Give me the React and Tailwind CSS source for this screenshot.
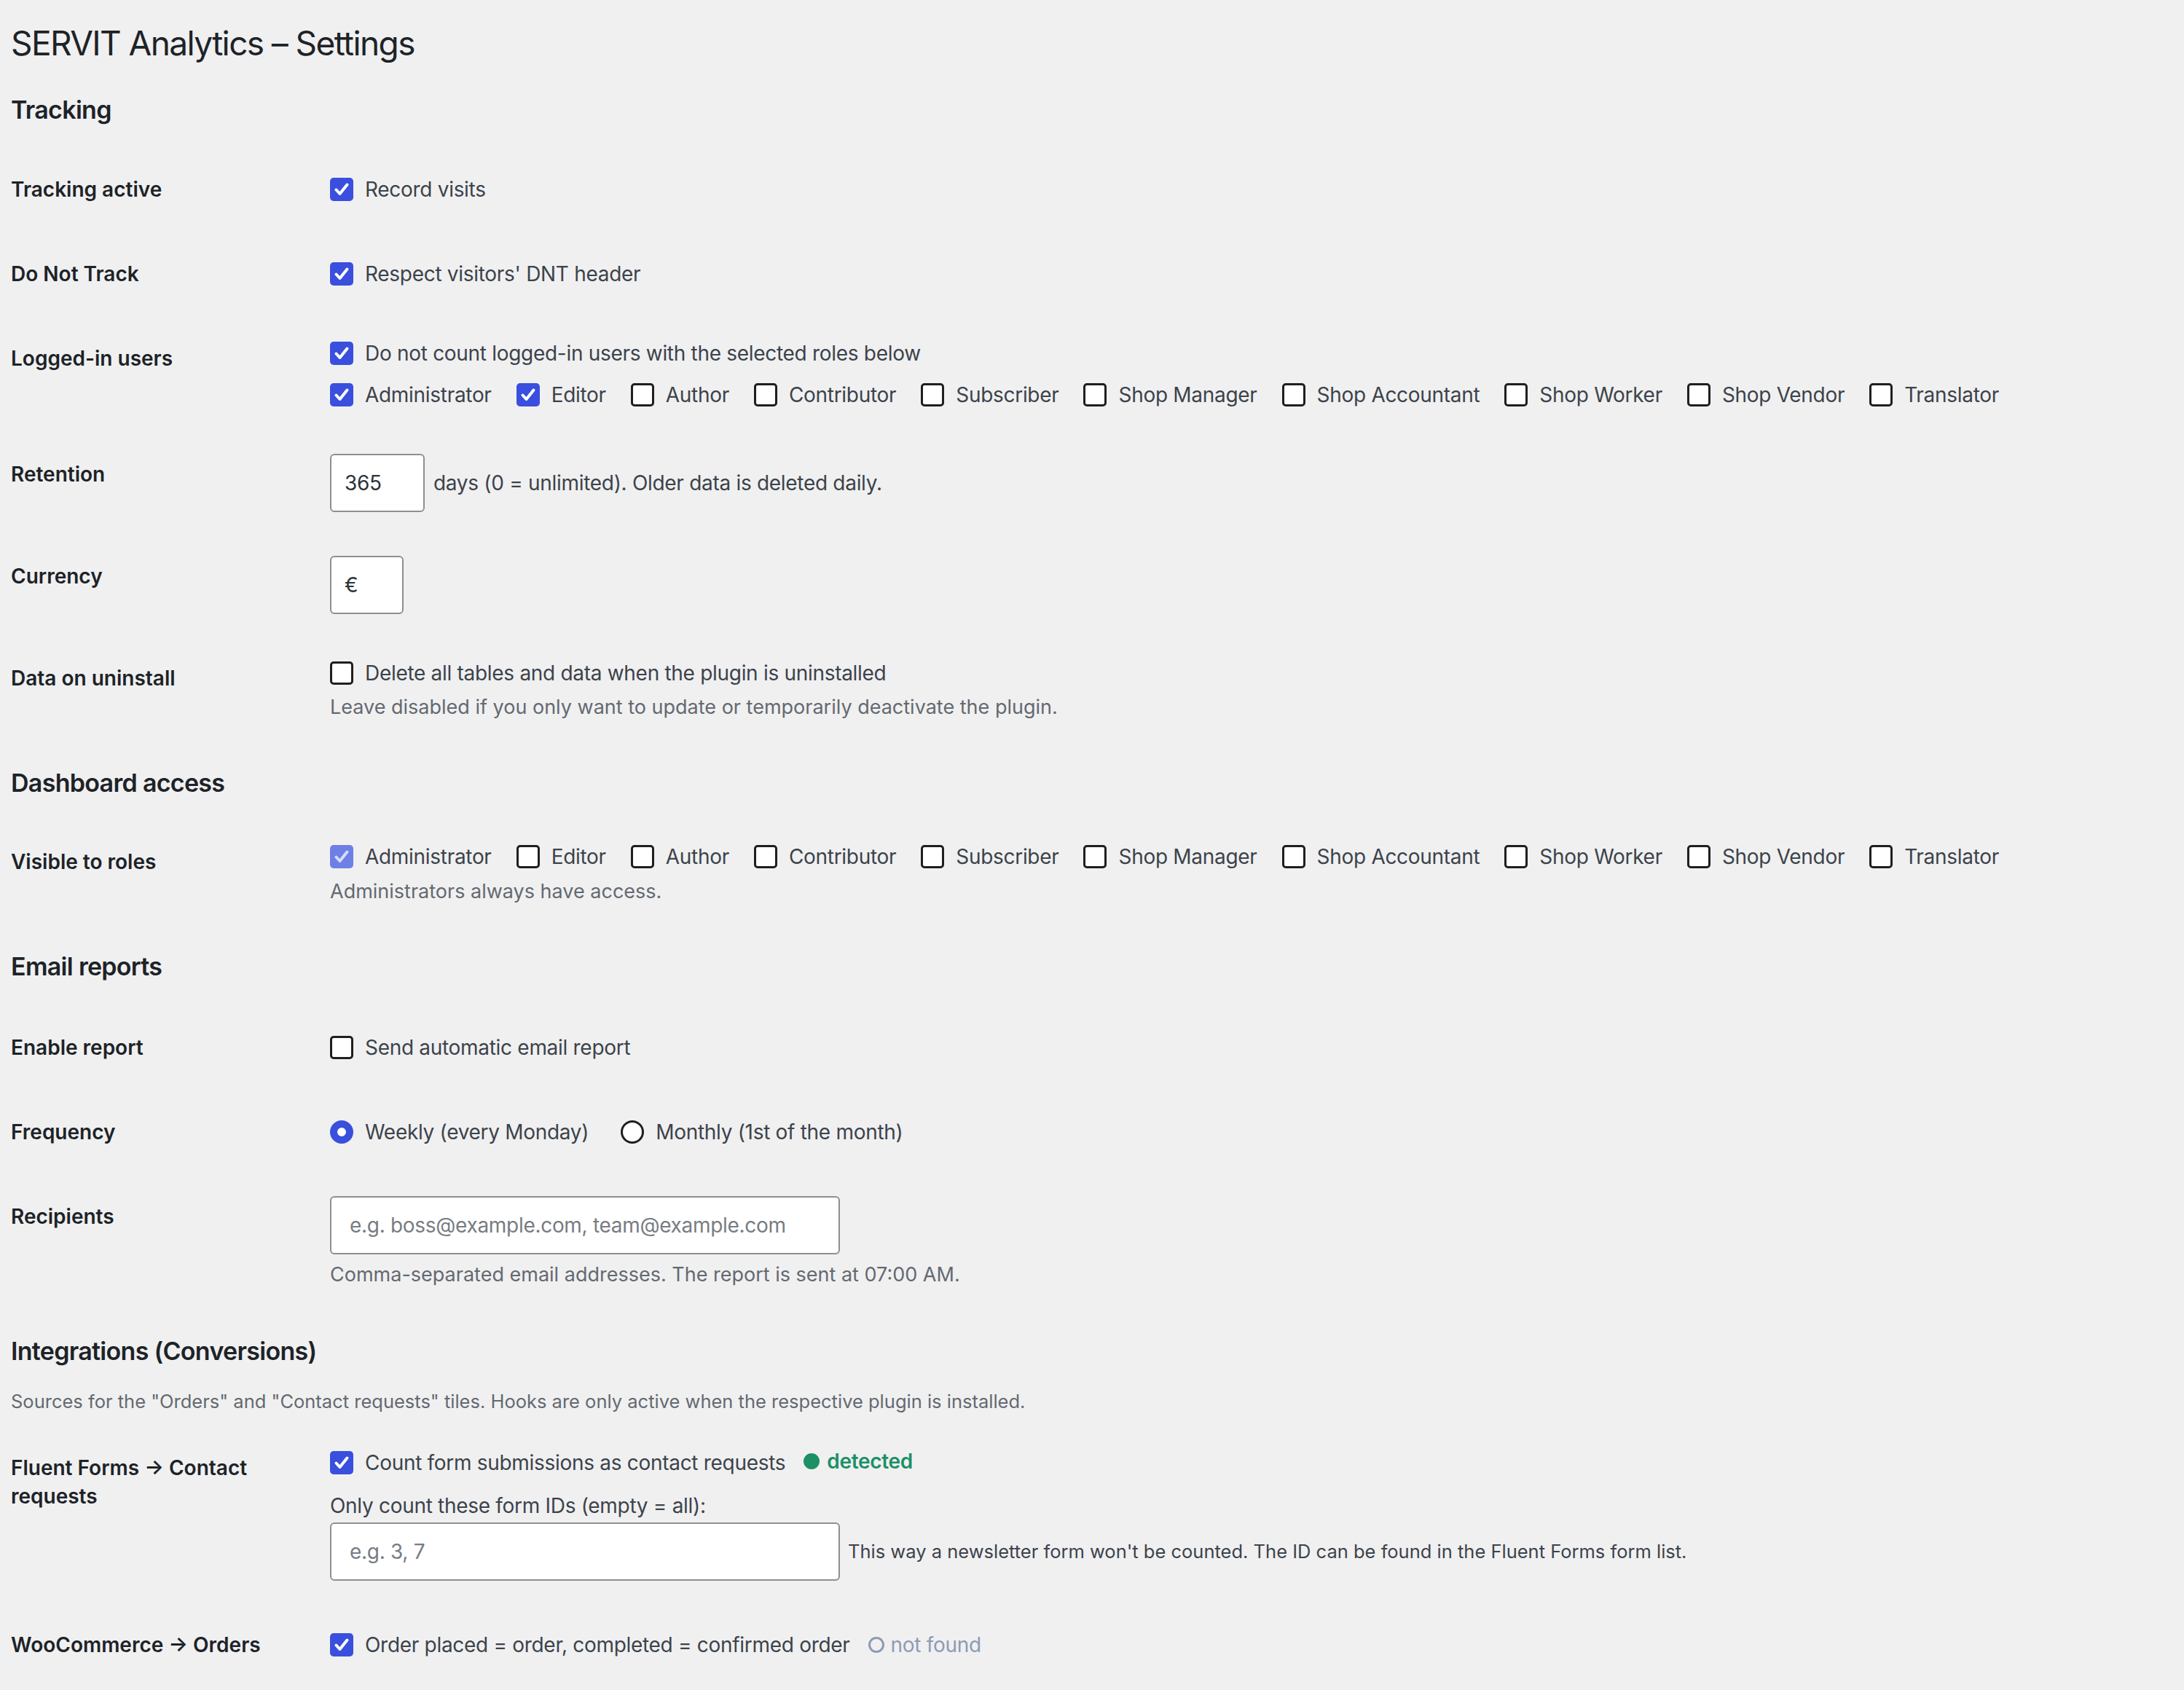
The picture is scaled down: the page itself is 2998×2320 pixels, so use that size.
import React from "react";

const ROLES = [
  "Administrator",
  "Editor",
  "Author",
  "Contributor",
  "Subscriber",
  "Shop Manager",
  "Shop Accountant",
  "Shop Worker",
  "Shop Vendor",
  "Translator",
];

function Box({ checked, disabled }) {
  if (!checked) {
    return <span className="w-[32px] h-[32px] shrink-0 rounded-[5px] border-[3px] border-[#1f1f1f] bg-white" />;
  }
  return (
    <span
      className={`w-[32px] h-[32px] shrink-0 rounded-[5px] flex items-center justify-center ${
        disabled ? "bg-[#6e7fe6]" : "bg-[#3a4fde]"
      }`}
    >
      <svg width="32" height="32" viewBox="0 0 32 32">
        <path
          d="M8.5 16.5 L13.5 22 L23.5 9.5"
          fill="none"
          stroke={disabled ? "#d6dbf8" : "#ffffff"}
          strokeWidth="4"
          strokeLinecap="round"
          strokeLinejoin="round"
        />
      </svg>
    </span>
  );
}

function Check({ checked, disabled, children, className = "" }) {
  return (
    <label className={`flex items-center gap-[16px] h-[42px] ${className}`}>
      <Box checked={checked} disabled={disabled} />
      <span>{children}</span>
    </label>
  );
}

function Radio({ checked, children, className = "" }) {
  return (
    <label className={`flex items-center gap-[16px] h-[42px] ${className}`}>
      {checked ? (
        <span className="w-[32px] h-[32px] shrink-0 rounded-full border-[10px] border-[#3a4fde] bg-white" />
      ) : (
        <span className="w-[32px] h-[32px] shrink-0 rounded-full border-[3px] border-[#1f1f1f] bg-white" />
      )}
      <span>{children}</span>
    </label>
  );
}

function RoleList({ checked = [], disabled = [] }) {
  return (
    <div className="flex items-center h-[42px]">
      {ROLES.map((r) => (
        <Check key={r} checked={checked.includes(r)} disabled={disabled.includes(r)} className="mr-[34px]">
          {r}
        </Check>
      ))}
    </div>
  );
}

function Row({ label, children, td = "pt-[37px] pb-[37px]", th = "pt-[40px] pb-[40px] leading-[36px]" }) {
  return (
    <div className="flex">
      <div className={`w-[400px] mr-[38px] shrink-0 text-[28px] tracking-normal font-semibold text-[#1d2327] ${th}`}>
        {label}
      </div>
      <div className={`flex-1 ${td}`}>{children}</div>
    </div>
  );
}

function Heading({ children, className = "" }) {
  return (
    <h2 className={`text-[34px] leading-[44px] tracking-[-0.7px] font-semibold text-[#1d2327] ${className}`}>
      {children}
    </h2>
  );
}

const desc = "text-[27px] leading-[40px] tracking-normal text-[#646970]";
const input =
  "h-[80px] bg-white border-2 border-[#8c8f94] rounded-[6px] text-[28px] text-[#2c3338] flex items-center";

export default function App() {
  return (
    <div
      className="min-h-screen bg-[#f0f0f1] text-[#3c434a] text-[28px] tracking-[-0.3px] pl-[15px] pb-[10px]"
      style={{ fontFamily: "Inter, 'Noto Sans', 'Liberation Sans', sans-serif" }}
    >
      <h1 className="pt-[29px] text-[46px] leading-[60px] tracking-[-1.6px] font-normal text-[#1d2327]">
        SERVIT Analytics – Settings
      </h1>

      <Heading className="mt-[40px]">Tracking</Heading>
      <div className="mt-[29px]">
        <Row label="Tracking active">
          <Check checked>Record visits</Check>
        </Row>
        <Row label="Do Not Track">
          <Check checked>Respect visitors' DNT header</Check>
        </Row>
        <Row label="Logged-in users" td="pt-[30px] pb-[30px]">
          <Check checked>Do not count logged-in users with the selected roles below</Check>
          <div className="mt-[15px]">
            <RoleList checked={["Administrator", "Editor"]} />
          </div>
        </Row>
        <Row label="Retention" td="pt-[30px] pb-[30px]">
          <div className="flex items-center gap-[12px]">
            <div className={`${input} w-[130px] pl-[18px]`}>365</div>
            <span>days (0 = unlimited). Older data is deleted daily.</span>
          </div>
        </Row>
        <Row label="Currency" td="pt-[30px] pb-[30px]">
          <div className={`${input} w-[101px] pl-[18px]`}>€</div>
        </Row>
        <Row label="Data on uninstall" td="pt-[30px] pb-[30px]">
          <Check>Delete all tables and data when the plugin is uninstalled</Check>
          <p className={`mt-[6px] ${desc}`}>
            Leave disabled if you only want to update or temporarily deactivate the plugin.
          </p>
        </Row>
      </div>

      <Heading className="mt-[32px]">Dashboard access</Heading>
      <div className="mt-[28px]">
        <Row label="Visible to roles" td="pt-[30px] pb-[30px]">
          <RoleList checked={["Administrator"]} disabled={["Administrator"]} />
          <p className={`mt-[7px] ${desc}`}>Administrators always have access.</p>
        </Row>
      </div>

      <Heading className="mt-[31px]">Email reports</Heading>
      <div className="mt-[31px]">
        <Row label="Enable report">
          <Check>Send automatic email report</Check>
        </Row>
        <Row label="Frequency">
          <div className="flex items-center">
            <Radio checked className="mr-[44px]">
              Weekly (every Monday)
            </Radio>
            <Radio>Monthly (1st of the month)</Radio>
          </div>
        </Row>
        <Row label="Recipients" td="pt-[30px] pb-[30px]">
          <div className={`${input} w-[700px] pl-[25px] text-[#787c82]`}>e.g. boss@example.com, team@example.com</div>
          <p className={`mt-[8px] ${desc}`}>Comma-separated email addresses. The report is sent at 07:00 AM.</p>
        </Row>
      </div>

      <Heading className="mt-[33px]">Integrations (Conversions)</Heading>
      <p className="mt-[27px] text-[25.5px] leading-[40px] tracking-normal text-[#646970]">
        Sources for the "Orders" and "Contact requests" tiles. Hooks are only active when the respective plugin is
        installed.
      </p>
      <div className="mt-[13px]">
        <Row label="Fluent Forms → Contact requests" th="pt-[39px] pb-[39px] leading-[39px]" td="pt-[30px] pb-[30px]">
          <div className="flex items-center">
            <Check checked>Count form submissions as contact requests</Check>
            <span className="ml-[25px] flex items-center gap-[10px] font-semibold text-[#1d9066] -mt-[4px]">
              <span className="w-[22px] h-[22px] rounded-full bg-[#1d9066]" />
              detected
            </span>
          </div>
          <p className="mt-[18px] leading-[40px] text-[#3c434a]">Only count these form IDs (empty = all):</p>
          <div className="mt-[3px] flex items-center gap-[11px]">
            <div className={`${input} w-[700px] pl-[25px] text-[#787c82]`}>e.g. 3, 7</div>
            <span className="text-[25.5px] tracking-normal text-[#3c434a]">
              This way a newsletter form won't be counted. The ID can be found in the Fluent Forms form list.
            </span>
          </div>
        </Row>
        <Row label="WooCommerce → Orders">
          <div className="flex items-center">
            <Check checked>Order placed = order, completed = confirmed order</Check>
            <span className="ml-[25px] flex items-center gap-[9px] text-[#8d9bb4]">
              <span className="w-[22px] h-[22px] rounded-full border-[3px] border-[#8d9bb4]" />
              not found
            </span>
          </div>
        </Row>
      </div>
    </div>
  );
}
